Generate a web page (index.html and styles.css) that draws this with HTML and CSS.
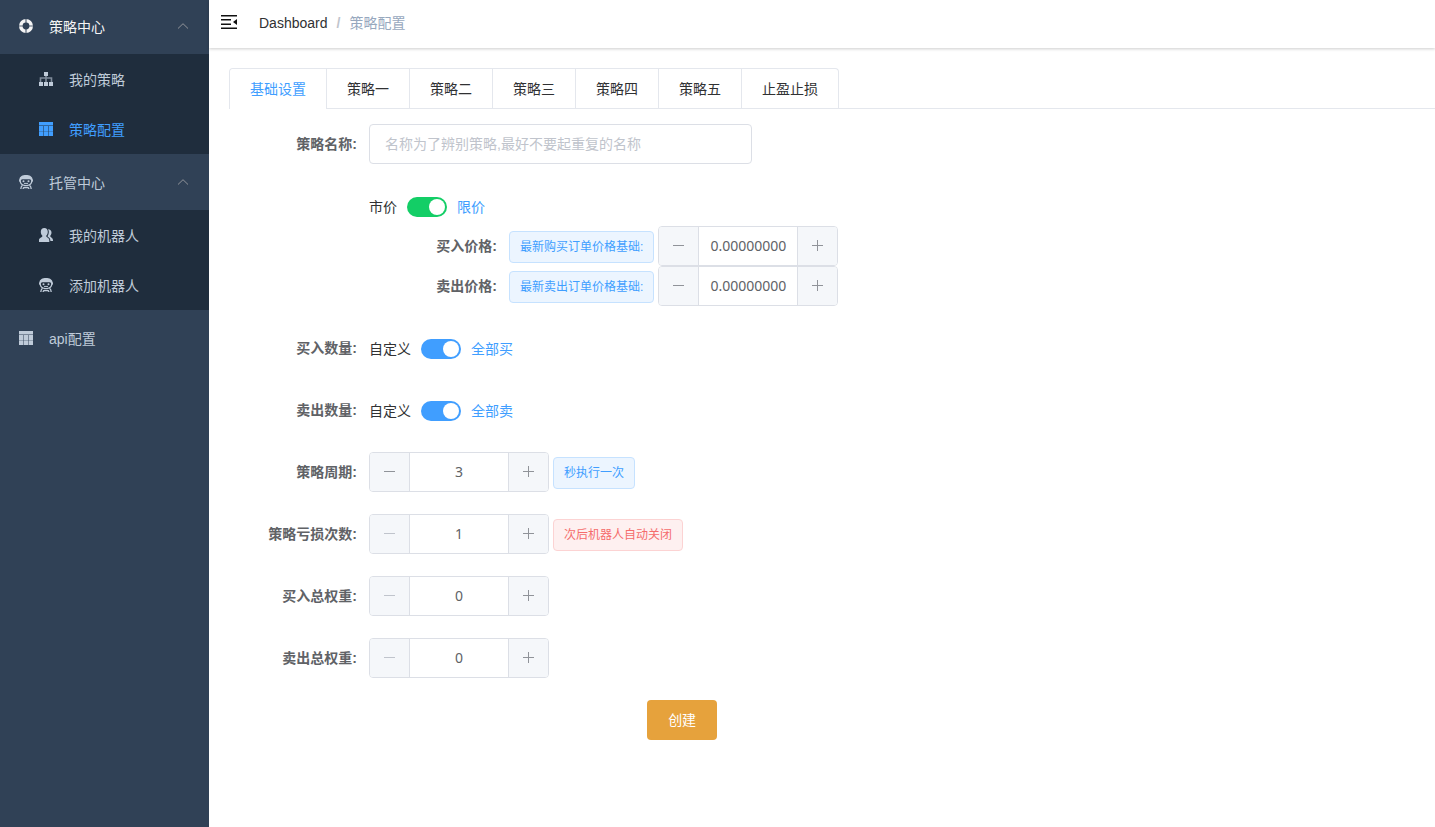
FILE: index.html
```html
<!DOCTYPE html>
<html lang="zh-CN">
<head>
<meta charset="utf-8">
<meta name="viewport" content="width=device-width, initial-scale=1">
<title>策略配置</title>
<link rel="stylesheet" href="styles.css">
</head>
<body>
<svg class="sprite" aria-hidden="true">
  <symbol id="i-help" viewBox="0 0 14 14"><circle cx="7" cy="7" r="5.2" fill="none" stroke="currentColor" stroke-width="3.6"/><path d="M7 0v4M7 10v4M0 7h4M10 7h4" stroke="#304156" stroke-opacity=".8" stroke-width="1.2"/></symbol>
  <symbol id="i-tree" viewBox="0 0 14 14"><path d="M5 0h4v4H5zM0 10h4v4H0zM5 10h4v4H5zM10 10h4v4h-4z" fill="currentColor"/><path d="M7 4v6M1.500 10V6h11v4" fill="none" stroke="currentColor" stroke-opacity=".6" stroke-width="1.600"/></symbol>
  <symbol id="i-grid" viewBox="0 0 14 14"><path d="M0 0h14v3H0zM0 4h4v10H0zM5 4h4v10H5zM10 4h4v10h-4z" fill="currentColor"/><path d="M0 3h14v1H0zM4 4h1v10H4zM9 4h1v10H9z" fill="currentColor" fill-opacity=".5"/><path d="M0 9.500h14" stroke="#304156" stroke-opacity=".3"/></symbol>
  <symbol id="i-robot" viewBox="0 0 14 14"><path fill="currentColor" fill-rule="evenodd" d="M7 0c3.600 0 6.200 1.500 6.500 4 .7.400.7 2.600-.2 3.100-.5 1.800-1.500 2.900-3 3.500-1 .400-2.100.5-3.300.5s-2.300-.1-3.300-.5c-1.500-.6-2.500-1.700-3-3.500C-.2 6.600-.2 4.400.5 4 .8 1.500 3.400 0 7 0zM3.400 4.200C2.100 4.300 1.800 5 1.900 6.200 2.100 8.700 4 9.900 7 9.900s4.900-1.200 5.100-3.700c.1-1.200-.2-1.900-1.500-2z"/><circle cx="4.500" cy="6.300" r="1" fill="currentColor"/><circle cx="9.500" cy="6.300" r="1" fill="currentColor"/><path d="M5 8.400h4" stroke="currentColor"/><path d="M3.500 10.300C2.400 11.200 1.900 12.300 1.800 14M10.500 10.300c1.100.9 1.600 2 1.700 3.700M4 14c.2-1 .8-1.500 1.500-1.500h3c.7 0 1.300.5 1.500 1.500" fill="none" stroke="currentColor" stroke-width="1.300"/></symbol>
  <symbol id="i-users" viewBox="0 0 14 14"><path fill="currentColor" d="M5.300 0C7.500 0 8.800 1.500 8.800 3.700c0 1.700-.6 3.100-1.500 3.900v.9c.3.900 3 1.200 3 3.700V14H0v-1.800c0-2.500 3-2.800 3.300-3.700v-.9C2.400 6.800 1.800 5.400 1.800 3.700 1.800 1.500 3.100 0 5.300 0zM9 1.300c2.200 0 3.500 1.500 3.500 3.300 0 1.300-.5 2.400-1.200 3.100v.8c.3.900 2.700 1.200 2.700 4V13h-2.600c0-2.500-1-3.400-2.700-4.300V7.800c.7-1 1.100-2.500 1.100-4 0-1-.3-1.800-.8-2.500z"/></symbol>
  <symbol id="i-up" viewBox="0 0 12 12"><path d="M1 8.500 6 3.700l5 4.800" fill="none" stroke="currentColor"/></symbol>
  <symbol id="i-minus" viewBox="0 0 13 14"><path d="M1 6.500h11" stroke="currentColor"/></symbol>
  <symbol id="i-plus" viewBox="0 0 13 14"><path d="M1 6.500h11M6.500 1v11" stroke="currentColor"/></symbol>
  <symbol id="i-fold" viewBox="0 0 16 14"><path d="M0 .8h16M0 4.800h10M0 9.200h10M0 13.200h16" stroke="currentColor" stroke-width="1.600"/><path d="M16 4v6l-4-3z" fill="currentColor"/></symbol>
</svg>
<div class="app">
  <nav class="sidebar" aria-label="主菜单">
    <button class="menu-title menu-title-first" aria-expanded="true"><svg class="icon"><use href="#i-help"/></svg><span>策略中心</span><svg class="arrow"><use href="#i-up"/></svg></button>
    <div class="submenu">
      <a class="menu-link" href="#list"><svg class="icon"><use href="#i-tree"/></svg><span>我的策略</span></a>
      <a class="menu-link active" href="#config" aria-current="page"><svg class="icon"><use href="#i-grid"/></svg><span>策略配置</span></a>
    </div>
    <button class="menu-title" aria-expanded="true"><svg class="icon"><use href="#i-robot"/></svg><span>托管中心</span><svg class="arrow"><use href="#i-up"/></svg></button>
    <div class="submenu">
      <a class="menu-link" href="#robots"><svg class="icon"><use href="#i-users"/></svg><span>我的机器人</span></a>
      <a class="menu-link" href="#add"><svg class="icon"><use href="#i-robot"/></svg><span>添加机器人</span></a>
    </div>
    <a class="menu-title" href="#api"><svg class="icon"><use href="#i-grid"/></svg><span>api配置</span></a>
  </nav>
  <div class="main">
    <header class="navbar">
      <button class="fold" aria-label="收起菜单"><svg class="fold-icon"><use href="#i-fold"/></svg></button>
      <div class="breadcrumb"><a href="#dashboard">Dashboard</a><span class="slash">/</span><span class="current">策略配置</span></div>
    </header>
    <main class="content">
      <div class="tabs">
        <div class="tab-list" role="tablist">
          <button class="tab selected" role="tab" aria-selected="true">基础设置</button>
          <button class="tab" role="tab">策略一</button>
          <button class="tab" role="tab">策略二</button>
          <button class="tab" role="tab">策略三</button>
          <button class="tab" role="tab">策略四</button>
          <button class="tab" role="tab">策略五</button>
          <button class="tab" role="tab">止盈止损</button>
        </div>
      </div>
      <form class="form">
        <div class="row"><label class="label" for="name">策略名称:</label><input class="text-input" id="name" type="text" placeholder="名称为了辨别策略,最好不要起重复的名称"></div>
        <div class="row row-price">
          <div class="field"><label class="switch-row"><span>市价</span><input class="switch green" type="checkbox" checked><span class="on">限价</span></label></div>
          <div class="row sub"><label class="label" for="buy">买入价格:</label><div class="field"><span class="tag">最新购买订单价格基础:</span><div class="number"><button class="step" type="button" aria-label="减少"><svg class="sign"><use href="#i-minus"/></svg></button><input class="value" id="buy" type="text" value="0.00000000"><button class="step" type="button" aria-label="增加"><svg class="sign"><use href="#i-plus"/></svg></button></div></div></div>
          <div class="row sub"><label class="label" for="sell">卖出价格:</label><div class="field"><span class="tag">最新卖出订单价格基础:</span><div class="number"><button class="step" type="button" aria-label="减少"><svg class="sign"><use href="#i-minus"/></svg></button><input class="value" id="sell" type="text" value="0.00000000"><button class="step" type="button" aria-label="增加"><svg class="sign"><use href="#i-plus"/></svg></button></div></div></div>
        </div>
        <div class="row"><label class="label" for="buy-all">买入数量:</label><div class="field"><label class="switch-row"><span>自定义</span><input class="switch" id="buy-all" type="checkbox" checked><span class="on">全部买</span></label></div></div>
        <div class="row"><label class="label" for="sell-all">卖出数量:</label><div class="field"><label class="switch-row"><span>自定义</span><input class="switch" id="sell-all" type="checkbox" checked><span class="on">全部卖</span></label></div></div>
        <div class="row"><label class="label" for="period">策略周期:</label><div class="field"><div class="number"><button class="step" type="button" aria-label="减少"><svg class="sign"><use href="#i-minus"/></svg></button><input class="value" id="period" type="text" value="3"><button class="step" type="button" aria-label="增加"><svg class="sign"><use href="#i-plus"/></svg></button></div><span class="tag">秒执行一次</span></div></div>
        <div class="row"><label class="label" for="loss">策略亏损次数:</label><div class="field"><div class="number"><button class="step" type="button" aria-label="减少" disabled><svg class="sign"><use href="#i-minus"/></svg></button><input class="value" id="loss" type="text" value="1"><button class="step" type="button" aria-label="增加"><svg class="sign"><use href="#i-plus"/></svg></button></div><span class="tag danger">次后机器人自动关闭</span></div></div>
        <div class="row"><label class="label" for="buy-weight">买入总权重:</label><div class="field"><div class="number"><button class="step" type="button" aria-label="减少" disabled><svg class="sign"><use href="#i-minus"/></svg></button><input class="value" id="buy-weight" type="text" value="0"><button class="step" type="button" aria-label="增加"><svg class="sign"><use href="#i-plus"/></svg></button></div></div></div>
        <div class="row"><label class="label" for="sell-weight">卖出总权重:</label><div class="field"><div class="number"><button class="step" type="button" aria-label="减少" disabled><svg class="sign"><use href="#i-minus"/></svg></button><input class="value" id="sell-weight" type="text" value="0"><button class="step" type="button" aria-label="增加"><svg class="sign"><use href="#i-plus"/></svg></button></div></div></div>
        <div class="actions"><button class="submit" type="submit">创建</button></div>
      </form>
    </main>
  </div>
</div>
</body>
</html>
```

FILE: styles.css
```css
* { box-sizing: border-box; }
body {
  margin: 0;
  color: #303133;
  background: #fff;
  font-family: "Liberation Sans", "Noto Sans CJK SC", sans-serif;
  font-size: 14px;
}
button, input { font: inherit; margin: 0; }
button { cursor: pointer; }
a { color: inherit; text-decoration: none; }
.sprite { display: none; }
.app { display: flex; min-height: 100vh; }

.sidebar { flex: none; width: 209px; background: #304156; color: #bfcbd9; }
.menu-title {
  display: flex;
  align-items: center;
  gap: 16px;
  width: 100%;
  height: 56px;
  padding: 0 20px 0 19px;
  border: 0;
  background: none;
  color: #bfcbd9;
  text-align: left;
}
.menu-title-first { height: 54px; padding-bottom: 2px; color: #f4f4f5; }
.icon { flex: none; width: 14px; height: 14px; }
.arrow { width: 12px; height: 12px; margin-left: auto; color: #909399; }
.submenu { background: #1f2d3d; }
.menu-link { display: flex; align-items: center; gap: 16px; height: 50px; padding: 0 20px 0 39px; }
.menu-link.active { color: #409eff; }

.main { flex: 1; min-width: 0; }
.navbar {
  display: flex;
  align-items: center;
  gap: 22px;
  height: 48px;
  padding: 0 12px 2px;
  box-shadow: 0 1px 3px rgba(0, 0, 0, .2);
}
.fold { display: flex; padding: 0 0 2px; border: 0; background: none; color: #111; }
.fold-icon { width: 16px; height: 14px; }
.breadcrumb { display: flex; align-items: center; }
.slash { margin: 0 9px; color: #c0c4cc; font-weight: bold; }
.current { padding-bottom: 2px; color: #97a8be; }

.content { padding: 20px 0 20px 20px; }
.tabs { display: flex; height: 41px; border-bottom: 1px solid #e4e7ed; }
.tab-list { display: flex; height: 41px; border: 1px solid #e4e7ed; border-bottom: 0; border-radius: 4px 4px 0 0; }
.tab {
  padding: 0 20px 2px;
  border: 0;
  border-left: 1px solid #e4e7ed;
  background: none;
  color: #303133;
}
.tab.selected { border-left: 0; border-radius: 4px 0 0; background: #fff; color: #409eff; }
.tab:not(.selected) { border-bottom: 1px solid #e4e7ed; }

.form { width: calc((100% + 20px) * .625); padding-top: 15px; }
.row { display: flex; align-items: center; margin-bottom: 22px; }
.row-price { display: block; margin-left: 140px; }
.sub { margin-bottom: 0; }
.label {
  flex: none;
  width: 140px;
  padding-right: 12px;
  color: #606266;
  font-weight: 700;
  line-height: 40px;
  text-align: right;
}
.field { display: flex; flex: none; align-items: center; gap: 4px; height: 40px; }
.text-input {
  flex: none;
  width: 50%;
  height: 40px;
  padding: 0 15px;
  border: 1px solid #dcdfe6;
  border-radius: 4px;
  color: #606266;
}
.text-input::placeholder { color: #c0c4cc; }
.switch-row { display: flex; align-items: center; gap: 10px; }
.switch {
  display: flex;
  align-items: center;
  justify-content: flex-end;
  appearance: none;
  width: 40px;
  height: 20px;
  margin-top: 2px;
  padding: 0 1px;
  border-radius: 10px;
  background: #409eff;
}
.switch::before { content: ""; width: 16px; height: 16px; margin-right: 1px; border-radius: 50%; background: #fff; }
.switch:not(:checked) { justify-content: flex-start; background: #c0ccda; }
.switch.green { background: #13ce66; }
.on { color: #409eff; }
.tag {
  height: 32px;
  margin-top: 2px;
  padding: 0 10px;
  border: 1px solid #c6e2ff;
  border-radius: 4px;
  background: #ecf5ff;
  color: #409eff;
  font-size: 12px;
  line-height: 30px;
  white-space: nowrap;
}
.tag.danger { border-color: #fcd3d3; background: #fef0f0; color: #f56c6c; }
.number { display: flex; width: 180px; height: 40px; overflow: hidden; border: 1px solid #dcdfe6; border-radius: 4px; }
.step {
  display: flex;
  flex: none;
  align-items: center;
  justify-content: center;
  width: 40px;
  padding: 0;
  border: 0;
  border-right: 1px solid #dcdfe6;
  background: #f5f7fa;
  color: #909399;
}
.step:last-child { border-right: 0; border-left: 1px solid #dcdfe6; }
.step:disabled { color: #c0c4cc; }
.sign { width: 13px; height: 14px; }
.value {
  flex: 1;
  min-width: 0;
  padding: 0 0 2px;
  border: 0;
  color: #606266;
  font-family: "Noto Sans", sans-serif;
  text-align: center;
}
.actions { display: flex; justify-content: center; margin-left: 140px; }
.submit { height: 40px; padding: 0 21px 2px; border: 0; border-radius: 4px; background: #e6a23c; color: #fff; }
```
